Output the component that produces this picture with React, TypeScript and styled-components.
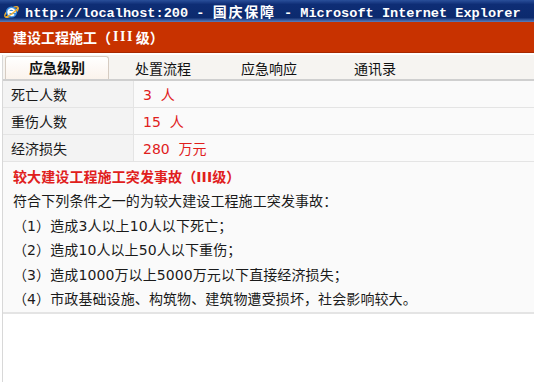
import React from "react";
import styled, { createGlobalStyle } from "styled-components";

const Global = createGlobalStyle`
  html, body { margin: 0; padding: 0; background: #ffffff; }
  body { width: 534px; height: 382px; overflow: hidden; }
`;

const CJK = `"DejaVu Sans", "Noto Sans CJK SC", sans-serif`;

const Window = styled.div`
  width: 534px;
  height: 382px;
  display: flex;
  flex-direction: column;
  background: #fff;
  font-family: ${CJK};
`;

const TitleBar = styled.div`
  height: 22px;
  display: flex;
  align-items: center;
  gap: 5px;
  padding-left: 3px;
  background: linear-gradient(180deg, #2a4f9a 0%, #0e2d75 20%, #0c2a6e 80%, #5a7fc0 100%);
  color: #fff;
  font-family: "Liberation Mono", "Noto Sans CJK SC", monospace;
  font-weight: bold;
  font-size: 13.6px;
  white-space: nowrap;
  overflow: hidden;
`;

const TitleCjk = styled.span`
  font-family: "Noto Sans CJK SC", sans-serif;
  font-size: 14px;
  letter-spacing: 1.8px;
`;

const Header = styled.div`
  height: 31px;
  display: flex;
  align-items: center;
  padding-left: 13px;
  background: #c83200;
  border-bottom: 1px solid #a82800;
  box-sizing: border-box;
  color: #fff;
  font-weight: bold;
  font-size: 14px;
  font-family: "Noto Sans CJK SC", "Liberation Serif", serif;
  white-space: pre;
`;

const Roman = styled.span`
  font-family: "Liberation Serif", serif;
  font-weight: bold;
  font-size: 14px;
  letter-spacing: 1.5px;
  margin: 0 2px;
`;

const Body = styled.div`
  flex: 1;
  display: flex;
  flex-direction: column;
  margin-top: 2px;
  margin-left: 2px;
  border-left: 1px solid #d8d8d8;
`;

const TabBar = styled.div`
  height: 24px;
  display: flex;
  align-items: flex-end;
  gap: 2px;
  padding-left: 2px;
  background: #f6f4f1;
  border-bottom: 2px solid #cfcfcf;
`;

const Tab = styled.div<{ $active?: boolean }>`
  width: 104px;
  height: ${(p) => (p.$active ? "23px" : "22px")};
  box-sizing: border-box;
  display: flex;
  align-items: center;
  justify-content: center;
  padding-bottom: 2px;
  font-size: 14px;
  color: #111;
  font-weight: ${(p) => (p.$active ? "bold" : "normal")};
  border: ${(p) => (p.$active ? "1px solid #d6ccc2" : "1px solid transparent")};
  border-bottom: none;
  border-radius: 3px 3px 0 0;
  background: ${(p) =>
    p.$active ? "linear-gradient(180deg, #ffffff 0%, #fbf3ec 100%)" : "transparent"};
`;

const Table = styled.div`
  display: grid;
  grid-template-columns: 131px 1fr;
`;

const Label = styled.div`
  height: 27px;
  box-sizing: border-box;
  display: flex;
  align-items: center;
  padding-left: 8px;
  background: #f3f3f3;
  border-bottom: 1px solid #e4e4e4;
  border-right: 1px solid #e4e4e4;
  font-size: 14px;
  color: #1a1a1a;
`;

const Value = styled.div`
  height: 27px;
  box-sizing: border-box;
  display: flex;
  align-items: center;
  padding-left: 9px;
  background: #fafafa;
  border-bottom: 1px solid #e4e4e4;
  font-size: 14px;
  color: #e0201c;
  white-space: pre;
`;

const Desc = styled.div`
  padding: 3px 0 1px 10px;
  background: #fafafa;
  border-bottom: 2px solid #e4e4e4;
  font-size: 14px;
  line-height: 24.4px;
  letter-spacing: 0.1px;
  color: #1a1a1a;
`;

const DescTitle = styled.div`
  color: #e0201c;
  font-weight: bold;
`;

const Line = styled.div``;

const IeIcon = () => (
  <svg width="17" height="17" viewBox="0 0 17 17">
    <ellipse cx="8.5" cy="9" rx="8" ry="3.2" fill="none" stroke="#f0b030" strokeWidth="1.4" transform="rotate(-35 8.5 9)" />
    <circle cx="8.5" cy="9" r="5.6" fill="#3a8ee0" />
    <path d="M5.2 9 h6.6 a3.3 3.3 0 1 0 -0.8 2.3" fill="none" stroke="#fff" strokeWidth="1.8" />
    <path d="M3 14 q6 -2 12 -9" fill="none" stroke="#f0b030" strokeWidth="1.3" />
  </svg>
);

const tabs = ["应急级别", "处置流程", "应急响应", "通讯录"];
const rows: [string, string][] = [
  ["死亡人数", "3  人"],
  ["重伤人数", "15  人"],
  ["经济损失", "280  万元"],
];
const lines = [
  "符合下列条件之一的为较大建设工程施工突发事故：",
  "（1）造成3人以上10人以下死亡；",
  "（2）造成10人以上50人以下重伤；",
  "（3）造成1000万以上5000万元以下直接经济损失；",
  "（4）市政基础设施、构筑物、建筑物遭受损坏，社会影响较大。",
];

export default function App() {
  return (
    <Window>
      <Global />
      <TitleBar>
        <IeIcon />
        <span>
          http://localhost:200 - <TitleCjk>国庆保障</TitleCjk> - Microsoft Internet Explorer
        </span>
      </TitleBar>
      <Header>
        建设工程施工（<Roman>III</Roman>级）
      </Header>
      <Body>
        <TabBar>
          {tabs.map((t, i) => (
            <Tab key={t} $active={i === 0}>
              {t}
            </Tab>
          ))}
        </TabBar>
        <Table>
          {rows.map(([l, v]) => (
            <React.Fragment key={l}>
              <Label>{l}</Label>
              <Value>{v}</Value>
            </React.Fragment>
          ))}
        </Table>
        <Desc>
          <DescTitle>较大建设工程施工突发事故（III级）</DescTitle>
          {lines.map((l) => (
            <Line key={l}>{l}</Line>
          ))}
        </Desc>
      </Body>
    </Window>
  );
}
